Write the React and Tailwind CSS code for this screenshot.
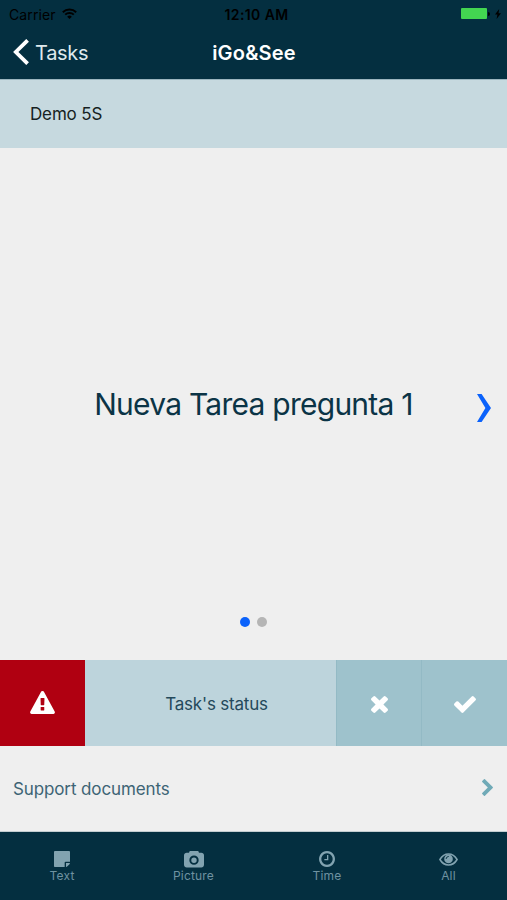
const ICONS = {
  warning: {
    box: "0 0 1792 1664",
    d: "M1024 1375v-190q0-14-9.5-23.5t-22.5-9.5h-198q-13 0-22.5 9.5t-9.5 23.5v190q0 14 9.5 23.5t22.5 9.5h198q13 0 22.5-9.5t9.5-23.5zm-2-374l18-459q0-12-10-19-13-11-24-11h-220q-11 0-24 11-10 7-10 21l17 457q0 10 10 16.5t24 6.5h185q14 0 23.5-6.5t10.5-16.5zm-14-934l768 1408q35 63-2 126-17 29-46.5 46t-63.5 17h-1536q-34 0-63.5-17t-46.5-46q-37-63-2-126l768-1408q17-31 47-49t65-18 65 18 47 49z",
  },
  times: {
    box: "302 366 1188 1188",
    d: "M1490 1322q0 40-28 68l-136 136q-28 28-68 28t-68-28l-294-294-294 294q-28 28-68 28t-68-28l-136-136q-28-28-28-68t28-68l294-294-294-294q-28-28-28-68t28-68l136-136q28-28 68-28t68 28l294 294 294-294q28-28 68-28t68 28l136 136q28 28 28 68t-28 68l-294 294 294 294q28 28 28 68z",
  },
  check: {
    box: "121 334 1550 1188",
    d: "M1671 566q0 40-28 68l-724 724-136 136q-28 28-68 28t-68-28l-136-136-362-362q-28-28-28-68t28-68l136-136q28-28 68-28t68 28l294 295 656-657q28-28 68-28t68 28l136 136q28 28 28 68z",
  },
  chevron: {
    box: "346 26 1036 1612",
    d: "M1363 877l-742 742q-19 19-45 19t-45-19l-166-166q-19-19-19-45t19-45l531-531-531-531q-19-19-19-45t19-45l166-166q19-19 45-19t45 19l742 742q19 19 19 45t-19 45z",
  },
  note: {
    box: "128 128 1536 1536",
    d: "M1152 1248v416h-928q-40 0-68-28t-28-68v-1344q0-40 28-68t68-28h1344q40 0 68 28t28 68v928h-416q-40 0-68 28t-28 68zm128 32h381q-15 82-65 132l-184 184q-50 50-132 65z",
  },
  camera: {
    box: "0 128 1920 1536",
    d: "M960 700a260 260 0 1 1 0 520a260 260 0 1 1 0-520zm704-444q106 0 181 75t75 181v896q0 106-75 181t-181 75h-1408q-106 0-181-75t-75-181v-896q0-106 75-181t181-75h224l51-136q19-49 69.5-84.5t103.5-35.5h512q53 0 103.5 35.5t69.5 84.5l51 136h224zm-704 1152q185 0 316.5-131.5t131.5-316.5-131.5-316.5-316.5-131.5-316.5 131.5-131.5 316.5 131.5 316.5 316.5 131.5z",
  },
  clock: {
    box: "128 128 1536 1536",
    d: "M1024 544v448q0 14-9 23t-23 9h-320q-14 0-23-9t-9-23v-64q0-14 9-23t23-9h224v-352q0-14 9-23t23-9h64q14 0 23 9t9 23zm416 352q0-148-73-273t-198-198-273-73-273 73-198 198-73 273 73 273 198 198 273 73 273-73 198-198 73-273zm224 0q0 209-103 385.5t-279.5 279.5-385.5 103-385.5-103-279.5-279.5-103-385.5 103-385.5 279.5-279.5 385.5-103 385.5 103 279.5 279.5 103 385.5z",
  },
};

const TABS = [
  { label: "Text", icon: "note", size: "h-4 w-4", width: "w-[124px]" },
  { label: "Picture", icon: "camera", size: "h-[17px] w-5", width: "w-[139px]" },
  { label: "Time", icon: "clock", size: "h-4 w-4", width: "w-[128px]" },
  { label: "All", icon: "eye", size: "h-[13px] w-[19px]", width: "w-[115px]" },
];

const EyeIcon = ({ className }) => (
  <svg viewBox="0 0 19 13" fill="none" stroke="currentColor" className={className}>
    <path d="M.9 6.5C2.9 3.1 6 1 9.5 1s6.600 2.100 8.600 5.500C16.100 9.900 13 12 9.500 12S2.900 9.900.9 6.500z" strokeWidth="1.5" />
    <circle cx="9.500" cy="5.900" r="4.300" fill="currentColor" stroke="none" />
    <path d="M7.100 5.600a2.400 2.400 0 0 1 2.300-2.200" stroke="#042f40" strokeWidth=".9" strokeLinecap="round" />
  </svg>
);

const Icon = ({ name, className }) =>
  name === "eye" ? (
    <EyeIcon className={className} />
  ) : (
    <svg viewBox={ICONS[name].box} fill="currentColor" className={className}>
      <path d={ICONS[name].d} />
    </svg>
  );

const StatusBar = () => (
  <div className="grid h-7 grid-cols-3 items-center pl-[9px] pr-1.5 text-[14px] text-black">
    <div className="flex items-center gap-[6px]">
      <span className="tracking-[0.1px]">Carrier</span>
      <svg viewBox="0 0 15 11" fill="none" stroke="currentColor" strokeWidth="1.9" className="mb-px h-[11px] w-[15px]">
        <path d="M.8 4.2a9.6 9.6 0 0 1 13.4 0M3.2 6.7a6.1 6.1 0 0 1 8.6 0" />
        <path d="M7.5 11 5.2 8.7a3.3 3.3 0 0 1 4.6 0z" fill="currentColor" stroke="none" />
      </svg>
    </div>
    <span className="pl-[3px] text-center font-semibold tracking-[0.4px]">12:10 AM</span>
    <div className="flex items-center justify-end pb-px">
      <span className="h-[11px] w-[26px] rounded-[1px] bg-[#43d551]" />
      <span className="ml-px h-1 w-[2px] rounded-r bg-black" />
      <svg viewBox="0 0 6 10" fill="currentColor" className="ml-[5px] h-[10px] w-[6px]">
        <path d="M4.2 0 0 5.6h2.4L1.6 10 6 4.2H3.5z" />
      </svg>
    </div>
  </div>
);

const NavBar = () => (
  <div className="grid h-[51px] grid-cols-3 items-center pb-[2px]">
    <div className="flex items-center gap-1.5 pl-[13px] text-[#dfe9ed]">
      <svg viewBox="0 0 16 26" fill="none" stroke="#fff" strokeWidth="3.8" className="mb-px h-[26px] w-4">
        <path d="M14.6 1.3 2.8 13l11.8 11.7" />
      </svg>
      <span className="text-[20px] tracking-[-0.3px]">Tasks</span>
    </div>
    <h1 className="pl-px text-center text-[20px] font-semibold tracking-[0.2px] text-white">iGo&amp;See</h1>
  </div>
);

const App = () => (
  <div className="flex h-[900px] w-[507px] flex-col overflow-hidden bg-[#efefef] font-['Inter',sans-serif]">
    <header className="h-[79px] bg-[#042f40]">
      <StatusBar />
      <NavBar />
    </header>

    <div className="flex h-[69px] items-center border-t border-[#9bb5bf] bg-[#c6d9df] pl-[30px] pt-px text-[17px] tracking-[-0.15px] text-[#161f22]">
      Demo 5S
    </div>

    <main className="flex h-[512px] flex-col">
      <div className="grid flex-1 grid-cols-[1fr_auto_1fr] items-center pt-[44px]">
        <p className="col-start-2 whitespace-nowrap text-[30px] tracking-[-0.75px] text-[#0b3446]">
          Nueva Tarea pregunta 1
        </p>
        <svg viewBox="0 0 14 28" fill="#0b62fb" className="mr-4 mt-[7px] h-7 w-3.5 justify-self-end">
          <path d="M0 0h4.6L14 14 4.6 28H0l8.4-14z" />
        </svg>
      </div>
      <div className="flex h-[44px] justify-center gap-[7px] pt-px">
        <span className="h-2.5 w-2.5 rounded-full bg-[#0b62fb]" />
        <span className="h-2.5 w-2.5 rounded-full bg-[#b5b5b5]" />
      </div>
    </main>

    <section className="flex h-[86px] text-white">
      <div className="flex w-[85px] items-center justify-center bg-[#b00011]">
        <Icon name="warning" className="mb-px h-[23px] w-[25px]" />
      </div>
      <div className="flex w-[251px] items-center justify-center bg-[#bdd4dc] pl-[12px] pt-[3px] text-[17px] tracking-[-0.2px] text-[#24495b]">
        Task's status
      </div>
      <div className="flex w-[85px] items-center justify-center border-l border-[#93bac5] bg-[#9ec2cc]">
        <Icon name="times" className="mt-0.5 h-[17px] w-[17px]" />
      </div>
      <div className="flex flex-1 items-center justify-center border-l border-[#93bac5] bg-[#9ec2cc]">
        <Icon name="check" className="mt-0.5 h-[17px] w-[22px]" />
      </div>
    </section>

    <div className="flex h-[86px] items-center justify-between border-b border-[#c3cdd0] pl-[13px] pr-[14px] pt-0.5">
      <span className="text-[17px] tracking-[-0.12px] text-[#3d6475]">Support documents</span>
      <Icon name="chevron" className="mb-1 h-[17px] w-[11px] text-[#70aab7]" />
    </div>

    <nav className="flex h-[68px] bg-[#042f40] pt-[18px] text-[#82a3b0]">
      {TABS.map((tab) => (
        <div key={tab.label} className={`flex flex-col items-center ${tab.width}`}>
          <div className="flex h-[18px] items-center justify-center">
            <Icon name={tab.icon} className={tab.size} />
          </div>
          <span className="text-[12px] leading-[15px] tracking-[0.2px] text-[#6f92a1]">{tab.label}</span>
        </div>
      ))}
    </nav>
  </div>
);

export default App;
